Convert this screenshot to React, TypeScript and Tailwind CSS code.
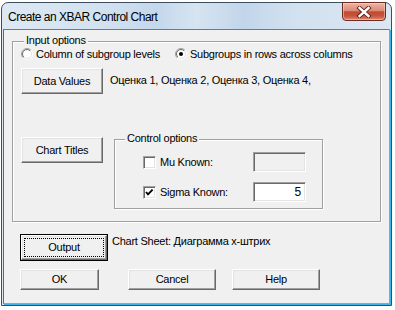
import React from "react";

function Btn({
  w,
  h,
  children,
  isDefault = false,
}: {
  w: number;
  h: number;
  children: React.ReactNode;
  isDefault?: boolean;
}) {
  if (isDefault) {
    return (
      <div
        className="shrink-0 border border-black bg-[#f0f0f0]"
        style={{ width: w, height: h }}
      >
        <div className="w-full h-full border border-t-white border-l-white border-r-[#696969] border-b-[#696969] shadow-[inset_-1px_-1px_0_#a0a0a0,inset_1px_1px_0_#e3e3e3] p-[2px]">
          <div className="w-full h-full border border-dotted border-black flex items-center justify-center text-[11px] text-black">
            {children}
          </div>
        </div>
      </div>
    );
  }
  return (
    <div
      className="shrink-0 bg-[#f0f0f0] border border-t-white border-l-white border-r-[#696969] border-b-[#696969] shadow-[inset_-1px_-1px_0_#a0a0a0,inset_1px_1px_0_#e3e3e3] flex items-center justify-center text-[11px] text-black"
      style={{ width: w, height: h }}
    >
      {children}
    </div>
  );
}

function Radio({ id, checked }: { id: string; checked?: boolean }) {
  return (
    <svg width="12" height="12" viewBox="0 0 12 12" className="shrink-0">
      <defs>
        <linearGradient id={`o${id}`} x1="0" y1="0" x2="1" y2="1">
          <stop offset="0.45" stopColor="#a0a0a0" />
          <stop offset="0.55" stopColor="#ffffff" />
        </linearGradient>
        <linearGradient id={`i${id}`} x1="0" y1="0" x2="1" y2="1">
          <stop offset="0.45" stopColor="#696969" />
          <stop offset="0.55" stopColor="#e3e3e3" />
        </linearGradient>
      </defs>
      <circle cx="6" cy="6" r="5.5" fill="none" stroke={`url(#o${id})`} />
      <circle cx="6" cy="6" r="4.5" fill="#ffffff" stroke={`url(#i${id})`} />
      {checked && <circle cx="6" cy="6" r="2" fill="#000000" />}
    </svg>
  );
}

function Check({ checked }: { checked?: boolean }) {
  return (
    <div className="w-[13px] h-[13px] shrink-0 bg-white border border-t-[#a0a0a0] border-l-[#a0a0a0] border-r-white border-b-white shadow-[inset_1px_1px_0_#696969,inset_-1px_-1px_0_#e3e3e3] flex items-center justify-center">
      {checked && (
        <svg width="9" height="9" viewBox="0 0 9 9">
          <polyline
            points="1,4 3,6.3 7.6,1.6"
            fill="none"
            stroke="#000"
            strokeWidth="1.9"
          />
        </svg>
      )}
    </div>
  );
}

function TextBox({ value, disabled }: { value?: string; disabled?: boolean }) {
  return (
    <div
      className={`w-[53px] h-[20px] border border-t-[#a0a0a0] border-l-[#a0a0a0] border-r-white border-b-white shadow-[inset_1px_1px_0_#696969,inset_-1px_-1px_0_#e3e3e3] flex items-center justify-end pr-[4px] text-[12px] text-black ${
        disabled ? "bg-[#f0f0f0]" : "bg-white"
      }`}
    >
      {value}
    </div>
  );
}

function Group({
  label,
  labelLeft,
  className,
  children,
}: {
  label: string;
  labelLeft: number;
  className: string;
  children: React.ReactNode;
}) {
  return (
    <div
      className={`relative border border-[#a0a0a0] shadow-[inset_1px_1px_0_#fff,1px_1px_0_#fff] ${className}`}
    >
      <span
        className="absolute top-[-8px] bg-[#f0f0f0] px-[2px] leading-[13px] text-[11px] text-black"
        style={{ left: labelLeft }}
      >
        {label}
      </span>
      {children}
    </div>
  );
}

export default function App() {
  return (
    <div className="w-[395px] h-[310px] bg-white overflow-hidden pt-[2px] pl-[1px] font-['Liberation_Sans',Arial,sans-serif] tracking-[-0.25px]">
      <div className="relative w-[391px] h-[304px] rounded-t-[7px] border border-[#3d4d60] bg-[linear-gradient(90deg,#dde8f3_0%,#d3e2f0_25%,#c4d8ec_40%,#d6e4f1_50%,#c2d6ea_62%,#d2e1ef_75%,#dbe7f3_100%)] flex flex-col px-[1px] pb-[1px]">
        <div className="h-[26px] shrink-0 flex items-center pl-[5px] pt-[2px] text-[12px] text-black tracking-[-0.5px]">
          Create an XBAR Control Chart
        </div>
        <div className="absolute left-[340px] top-[-1px] w-[44px] h-[19px] rounded-b-[4px] border border-[#6e2a1f] bg-[linear-gradient(180deg,#eeb4a6_0%,#dc8b77_45%,#c24a31_52%,#c65339_75%,#dc8a72_100%)] shadow-[inset_0_0_0_1px_rgba(255,220,210,0.5)] flex items-center justify-center">
          <svg width="16" height="12" viewBox="0 0 16 12">
            <path
              d="M3.5 2 L12.5 10 M12.5 2 L3.5 10"
              stroke="#5a1f17"
              strokeWidth="4.2"
              strokeLinecap="square"
            />
            <path
              d="M3.5 2 L12.5 10 M12.5 2 L3.5 10"
              stroke="#ffffff"
              strokeWidth="2.4"
              strokeLinecap="square"
            />
          </svg>
        </div>
        <div className="flex-1 bg-[#f0f0f0] border border-t-[#6b7a8c] border-l-[#5a6a7c] border-r-[#a0a0a0] border-b-[#a0a0a0] shadow-[1px_1px_0_#3cb2e6] pl-[8px] pt-[11px] flex flex-col text-[11px] text-black">
          <Group
            label="Input options"
            labelLeft={11}
            className="w-[369px] h-[181px] shrink-0 pl-[8px] pt-[6px] flex flex-col"
          >
            <div className="h-[12px] flex items-center">
              <div className="w-[154px] flex items-center">
                <Radio id="r1" />
                <span className="ml-[3px] leading-[13px]">
                  Column of subgroup levels
                </span>
              </div>
              <Radio id="r2" checked />
              <span className="ml-[3px] leading-[13px]">
                Subgroups in rows across columns
              </span>
            </div>
            <div className="mt-[8px] flex items-start">
              <Btn w={82} h={26}>
                Data Values
              </Btn>
              <span className="ml-[7px] mt-[6px] leading-[13px]">
                Оценка 1, Оценка 2, Оценка 3, Оценка 4,
              </span>
            </div>
            <div className="mt-[43px] flex items-start">
              <Btn w={82} h={26}>
                Chart Titles
              </Btn>
              <Group
                label="Control options"
                labelLeft={10}
                className="ml-[11px] mt-[2px] w-[209px] h-[70px] flex flex-col pt-[12px] pl-[28px]"
              >
                <div className="h-[20px] flex items-center">
                  <Check />
                  <span className="ml-[4px] w-[93px] leading-[13px]">Mu Known:</span>
                  <TextBox disabled />
                </div>
                <div className="mt-[10px] h-[20px] flex items-center">
                  <Check checked />
                  <span className="ml-[4px] w-[93px] leading-[13px]">
                    Sigma Known:
                  </span>
                  <TextBox value="5" />
                </div>
              </Group>
            </div>
          </Group>
          <div className="mt-[12px] pl-[8px] flex items-start">
            <Btn w={88} h={27} isDefault>
              Output
            </Btn>
            <span className="ml-[4px] mt-[1px] leading-[13px]">
              Chart Sheet: Диаграмма х-штрих
            </span>
          </div>
          <div className="mt-[8px] pl-[8px] flex items-start">
            <Btn w={79} h={21}>
              OK
            </Btn>
            <div className="ml-[29px]">
              <Btn w={88} h={21}>
                Cancel
              </Btn>
            </div>
            <div className="ml-[16px]">
              <Btn w={88} h={21}>
                Help
              </Btn>
            </div>
          </div>
        </div>
      </div>
    </div>
  );
}
